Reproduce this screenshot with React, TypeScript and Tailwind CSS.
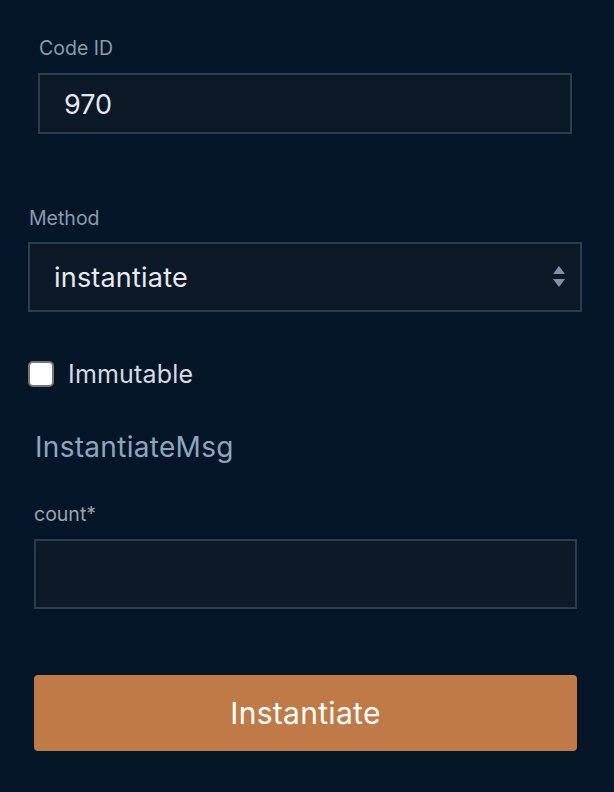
import React from "react";

export default function App() {
  return (
    <div
      className="w-[614px] h-[792px] bg-[#061629] overflow-hidden"
      style={{ fontFamily: "Inter, 'Noto Sans', sans-serif" }}
    >
      <div className="px-[38px] pt-[36px]">
        <div className="text-[19.5px] leading-[24px] text-[#8a9bb0] pl-[1px]">Code ID</div>
        <div className="mt-[13px] w-[534px] h-[61px] border-2 border-[#2d3d50] bg-[#0c1927] flex items-center pl-[24px] text-[27px] leading-[34px] text-[#e6e9ee]">
          <span className="mt-[2px]">970</span>
        </div>
      </div>
      <div className="px-[28px] pt-[72px]">
        <div className="text-[19.5px] leading-[24px] text-[#8a9bb0] pl-[1px]">Method</div>
        <div className="mt-[12px] w-[554px] h-[70px] border-2 border-[#2d3d50] bg-[#0c1927] flex items-center justify-between pl-[24px] pr-[14px] text-[27px] leading-[34px] text-[#e6e9ee] tracking-[0.2px]">
          <span className="mt-[2px]">instantiate</span>
          <svg width="14" height="26" viewBox="0 0 14 26">
            <polygon points="7,2 13,10 1,10" fill="#8590a8" />
            <polygon points="1,15 13,15 7,23" fill="#8590a8" />
          </svg>
        </div>
        <div className="mt-[47px] flex items-center gap-[14px]">
          <div className="w-[26px] h-[26px] rounded-[5px] bg-white border-2 border-[#767676]" />
          <span className="text-[25px] leading-[30px] text-[#d7dbe0] tracking-[0.2px]">Immutable</span>
        </div>
      </div>
      <div className="px-[34px]">
        <div className="mt-[41px] pl-[1px] text-[28px] leading-[34px] text-[#8fa5bd] tracking-[0.3px]">InstantiateMsg</div>
        <div className="mt-[38px] text-[19.5px] leading-[24px] text-[#9aa3ad]">count*</div>
        <div className="mt-[13px] w-[543px] h-[70px] border-2 border-[#2d3d50] bg-[#0c1927]" />
        <button className="mt-[66px] w-[543px] h-[76px] rounded-[4px] bg-[#c07a47] text-white text-[30px] leading-[36px] tracking-[0.3px] flex items-center justify-center">
          Instantiate
        </button>
      </div>
    </div>
  );
}
